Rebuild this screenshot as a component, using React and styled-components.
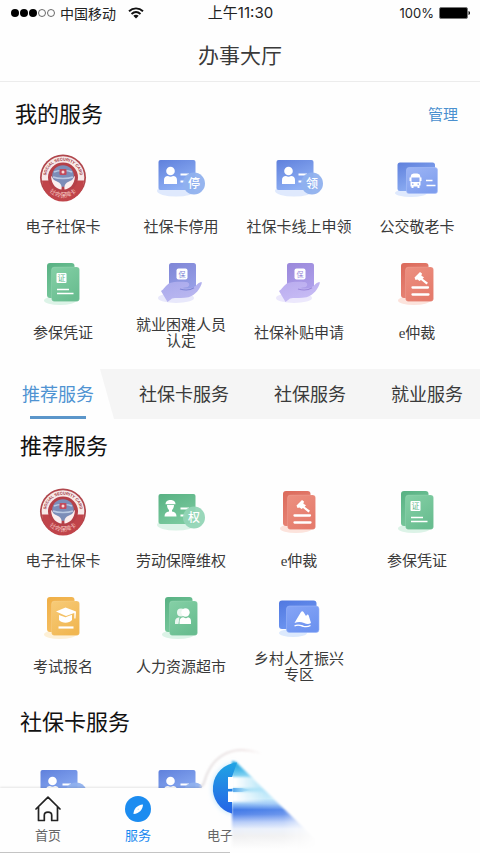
import React, { useState } from 'react';
import styled, { createGlobalStyle } from 'styled-components';

const GlobalStyle = createGlobalStyle`
  * {
    box-sizing: border-box;
  }
  body {
    margin: 0;
    background: #fefefe;
    font-family: "Liberation Sans", "Noto Sans CJK SC", sans-serif;
    color: #3a3a3a;
  }
  button {
    border: none;
    background: none;
    padding: 0;
    font-family: inherit;
    color: inherit;
    cursor: pointer;
  }
`;

const Shell = styled.div`
  display: flex;
  flex-direction: column;
  height: 100vh;
  overflow: hidden;
`;

const StatusBar = styled.div`
  display: grid;
  grid-template-columns: 1fr auto 1fr;
  align-items: center;
  height: 28px;
  padding: 0 9px 2px 10px;
  flex-shrink: 0;
  font-family: Inter, "Noto Sans CJK SC", sans-serif;
  font-size: 13px;
  color: #222;
`;

const StatusGroup = styled.div`
  display: flex;
  align-items: center;
  gap: ${({ $gap }) => $gap}px;
  justify-content: ${({ $end }) => ($end ? 'flex-end' : 'flex-start')};
`;

const Carrier = styled.span`
  font-size: 14px;
  margin-right: 8px;
`;

const Clock = styled.span`
  font-size: 15px;
  line-height: 20px;
`;

const TitleBar = styled.header`
  display: flex;
  align-items: center;
  justify-content: center;
  height: 54px;
  padding-top: 2px;
  flex-shrink: 0;
  border-bottom: 1px solid #ececec;
`;

const PageTitle = styled.h1`
  margin: 0;
  font-size: 21px;
  line-height: 32px;
  font-weight: 400;
`;

const Content = styled.main`
  flex: 1;
  min-height: 0;
  overflow-y: auto;
  scrollbar-width: none;
`;

const MyServices = styled.section`
  padding-bottom: 18px;
`;

const MyHead = styled.div`
  display: flex;
  align-items: center;
  justify-content: space-between;
  padding: 17px 22px 19px 15px;
`;

const SectionTitle = styled.h2`
  margin: 0;
  font-size: 22px;
  line-height: 32px;
  font-weight: 400;
  color: #111;
`;

const ManageButton = styled.button`
  font-size: 15px;
  line-height: 32px;
  color: #4a90cf;
`;

const ServiceGroup = styled.section`
  padding-top: ${({ $first }) => ($first ? 12 : 22)}px;

  ${SectionTitle} {
    padding: 0 20px 21px;
  }
`;

const Grid = styled.div`
  display: grid;
  grid-template-columns: repeat(4, 1fr);
  row-gap: 11px;
  padding: 0 4px;
`;

const ServiceItem = styled.button`
  display: flex;
  flex-direction: column;
  align-items: center;
  gap: 3px;
`;

const ServiceLabel = styled.span`
  display: flex;
  align-items: center;
  height: 36px;
  font-family: "Liberation Serif", "Noto Sans CJK SC", sans-serif;
  font-size: 15px;
  line-height: 16px;
  text-align: center;
  white-space: pre;
`;

const TabBar = styled.div`
  display: flex;
  height: 50px;
  background: #f5f5f5;
  overflow: hidden;
`;

const Tab = styled.button`
  position: relative;
  flex-shrink: 0;
  padding: 0 20px 2px ${({ $active }) => ($active ? 22 : 25)}px;
  font-size: 18px;
  color: ${({ $active }) => ($active ? '#4f93d2' : '#3a3a3a')};
  background: ${({ $active }) => ($active ? '#fefefe' : 'transparent')};
  clip-path: ${({ $active }) =>
    $active ? 'polygon(0 0, calc(100% - 14px) 0, 100% 100%, 0 100%)' : 'none'};

  &::after {
    content: '';
    display: ${({ $active }) => ($active ? 'block' : 'none')};
    position: absolute;
    left: 30px;
    right: 28px;
    bottom: 0;
    height: 3px;
    background: #5b96ca;
  }
`;

const NavBar = styled.nav`
  position: relative;
  display: grid;
  grid-template-columns: 19% 19% 24% 1fr;
  height: 65px;
  padding: 0 3px;
  flex-shrink: 0;
  background: #fefefe;
`;

const NavEdge = styled.div`
  position: absolute;
  left: 0;
  width: 48%;
  top: 0;
  bottom: 0;
  border-bottom: 1px solid #c4c4c4;
  pointer-events: none;

  &::before {
    content: '';
    position: absolute;
    inset: 0 12% 0 0;
    box-shadow: 0 -1px 2px rgba(0, 0, 0, 0.1);
    clip-path: inset(-4px 0 0 0);
  }
`;

const NavItem = styled.button`
  position: relative;
  display: flex;
  flex-direction: column;
  align-items: center;
  justify-content: flex-end;
  gap: 4px;
  padding-bottom: 7px;
  font-size: 13px;
  line-height: 20px;
  color: ${({ $active }) => ($active ? '#1989f0' : '#666')};
`;

const CardNavItem = styled(NavItem)`
  align-items: flex-start;
  padding-left: 24px;
`;

const CardArt = styled.svg`
  position: absolute;
  left: 15px;
  bottom: 1px;
`;

const palette = {
  blue: { back: ['#5f80dc', '#8fb0f4'], front: ['#9db5f5', '#7f9eee'], badge: '#8fb0ee', shade: '#dfe9fd' },
  royal: { back: ['#5078e0', '#6f97f2'], front: ['#86a5f6', '#6d93f0'], badge: '#8fb0ee', shade: '#dce9fd' },
  green: { back: ['#58b183', '#79c99d'], front: ['#85d0a6', '#69bd90'], badge: '#93d5b6', shade: '#dcf3e7' },
  red: { back: ['#db6a5b', '#e88576'], front: ['#ec9080', '#e57b6c'], badge: '#eda295', shade: '#fce3dc' },
  yellow: { back: ['#efae45', '#f5c065'], front: ['#f7cb78', '#f1b752'], badge: '#f6cd86', shade: '#fdf0d6' },
  indigo: { back: ['#7e85d6', '#969ee6'], front: ['#a9a9ec', '#bbb8f0'], badge: '#fff', shade: '#e8e8fb' },
  purple: { back: ['#9a88da', '#ad9eea'], front: ['#b9abee', '#c8bdf5'], badge: '#fff', shade: '#ece8fc' },
};

const Art = ({ tone, id, children }) => {
  const c = palette[tone];
  return (
    <svg width="56" height="56" viewBox="0 0 56 56" aria-hidden="true">
      <defs>
        <linearGradient id={`${id}-b`} x1="0" y1="0" x2="0.5" y2="1">
          <stop offset="0" stopColor={c.back[0]} />
          <stop offset="1" stopColor={c.back[1]} />
        </linearGradient>
        <linearGradient id={`${id}-f`} x1="0" y1="0" x2="0.6" y2="1">
          <stop offset="0" stopColor={c.front[0]} />
          <stop offset="1" stopColor={c.front[1]} />
        </linearGradient>
      </defs>
      {children}
    </svg>
  );
};

const IdCardIcon = ({ tone, id, mark, worker }) => (
  <Art tone={tone} id={id}>
    <ellipse cx="23" cy="41" rx="19" ry="5.5" fill={palette[tone].shade} />
    <rect x="5.5" y="10" width="37" height="30" rx="2" fill={`url(#${id}-b)`} />
    {worker ? (
      <g fill="#fff">
        <path d="M12.500 20.200c0-5.500 10-5.500 10 0z" />
        <path d="M14 21h7c0 2.800-1.200 4.300-2 5v1.500c3 .6 4.500 2 4.500 5H11.500c0-3 1.500-4.400 4.500-5V26c-.8-.7-2-2.200-2-5z" />
      </g>
    ) : (
      <g fill="#fff">
        <circle cx="17.500" cy="21" r="4.300" />
        <path d="M11 34v-4c0-2.500 1.500-4 4-4 1.500 1 3.500 1 5 0 2.500 0 4 1.500 4 4v4z" />
      </g>
    )}
    <path d="M27.500 24.500h8.500M27.500 31.500h5" stroke="#fff" strokeWidth="1.800" />
    <circle cx="41" cy="33.500" r="11" fill={palette[tone].badge} fillOpacity="0.94" />
    {mark && (
      <text x="41" y="37.500" fontSize="12" fontWeight="500" textAnchor="middle" fill="#fff">{mark}</text>
    )}
  </Art>
);

const BusCardIcon = ({ id }) => (
  <Art tone="blue" id={id}>
    <ellipse cx="22" cy="43" rx="16" ry="4" fill={palette.blue.shade} />
    <rect x="8.500" y="12.500" width="37.500" height="28.500" rx="2.500" fill={`url(#${id}-b)`} />
    <rect x="17.500" y="17.500" width="31" height="26" rx="2.500" fill={`url(#${id}-f)`} stroke="#a9c0f8" strokeWidth="0.600" />
    <path fill="#fff" fillRule="evenodd" d="M22 25.500c0-1.500 2-2 4.500-2s4.500.5 4.500 2l.5 2h1v3.500h-1v4.500h-1V38h-2v-1.500h-4V38h-2v-1.500h-1V31h-1v-3.500h1zM22.500 27.500v4.500h8v-4.500zM23 33.500v1.200h1.500v-1.200zM28.500 33.500v1.200H30v-1.200z" />
    <path d="M37 30.500h6.500M37.500 35.500h9" stroke="#fff" strokeWidth="1.700" />
  </Art>
);

const VillageIcon = ({ id }) => (
  <Art tone="royal" id={id}>
    <ellipse cx="22" cy="43" rx="14" ry="4" fill={palette.royal.shade} />
    <rect x="8" y="10.500" width="37.500" height="28.500" rx="3" fill={`url(#${id}-b)`} />
    <rect x="15.500" y="16" width="32.500" height="26.500" rx="3" fill={`url(#${id}-f)`} stroke="#9bb5f8" strokeWidth="0.600" />
    <path fill="#fff" d="M23.500 33l2-3.500 4.500-7.500c1-1.200 1.800-.8 2.500 0l2.500 4 1-1.200c.8-.5 1.300 0 1.700.7L40 33c-2.500 1.500-4.500 1-7 0-3-1.200-6-1.200-9.500 0z" />
    <path d="M23.500 36c3.500-2 6.500-.5 9 .3 2.500.7 4.500.5 7-.8" fill="none" stroke="#fff" strokeWidth="1.400" />
  </Art>
);

const DocIcon = ({ tone, id, children }) => (
  <Art tone={tone} id={id}>
    <ellipse cx="25" cy="44.500" rx="16" ry="4.500" fill={palette[tone].shade} />
    <rect x="12" y="7" width="27.500" height="35" rx="3" fill={`url(#${id}-b)`} />
    <rect x="16.500" y="11" width="28" height="34.500" rx="3" fill={`url(#${id}-f)`} stroke="#fff" strokeOpacity="0.200" strokeWidth="0.600" />
    {children}
  </Art>
);

const ProofIcon = ({ id }) => (
  <DocIcon tone="green" id={id}>
    <rect x="21.500" y="17" width="10" height="10" rx="1" fill="#fff" />
    <text x="26.500" y="25" fontSize="8" textAnchor="middle" fill="#64b98b">证</text>
    <path d="M22 33.500h12M22 37.500h16.500" stroke="#fff" strokeWidth="1.700" />
  </DocIcon>
);

const GavelIcon = ({ id }) => (
  <DocIcon tone="red" id={id}>
    <path d="M25.500 21.500l5.500-5.500 2 1.500-.6 2.200 2.600 1.500-1.300 1.500 5.300 4-1.500 1.700-5.500-4.400-1.500 1-2-1.500-2 .5z" fill="#fff" />
    <path d="M23.500 31.500H39M23.500 38.500H39.500" stroke="#fff" strokeWidth="2.300" strokeLinecap="round" />
  </DocIcon>
);

const ExamIcon = ({ id }) => (
  <DocIcon tone="yellow" id={id}>
    <path fill="#fff" d="M21 21.500l9.500-4 10.500 4-.5 7h-1.200v-5.500L31 26z" />
    <path fill="#fff" d="M24 25l6.500 2.200 6.500-2.500v5.300c-3 3.500-10 3.500-13 0z" />
    <path d="M23.500 37.500h15" stroke="#fff" strokeWidth="2.200" />
  </DocIcon>
);

const PeopleIcon = ({ id }) => (
  <DocIcon tone="green" id={id}>
    <g fill="#fff">
      <circle cx="28" cy="22.500" r="4" fillOpacity="0.850" />
      <circle cx="32.500" cy="22.500" r="4.200" />
      <path d="M22 34v-2.500c0-2.500 1.500-4 4.500-4.200L25.500 34z" fillOpacity="0.850" />
      <path d="M26.500 34v-2.500c0-2.500 1.500-4.200 4-4.200 2 1.200 3 1.200 4.500 0 2 .3 3 1.700 3 4.200V34z" />
    </g>
  </DocIcon>
);

const HandIcon = ({ tone, id }) => (
  <Art tone={tone} id={id}>
    <ellipse cx="23" cy="42" rx="18" ry="5" fill={palette[tone].shade} />
    <rect x="16" y="7" width="27" height="29" rx="2.500" fill={`url(#${id}-b)`} />
    <rect x="23.500" y="12.500" width="11" height="11" rx="2" fill="#fff" />
    <text x="29" y="20.500" fontSize="7" textAnchor="middle" fill={palette[tone].back[0]}>保</text>
    <path fill={`url(#${id}-f)`} d="M8 35c3-1.500 4.500-6 9-8 3-1.500 12.500-1.300 16.500-1 3 .2 3.800 3.800 1 5-1.500.6-4 .6-5.500 1 5 1.200 9.500.5 13-1.700 2.500-1.600 3.500-4.300 7-4-1.500 6.500-6.500 13-13.500 15-6 1.300-12 0-16.500 1.200l-4.500 3.500z" />
    <path d="M27 33c5 1.500 10.500 1 14-1.300" fill="none" stroke={palette[tone].back[0]} strokeWidth="1.200" />
  </Art>
);

const SealIcon = ({ id }) => (
  <svg width="56" height="56" viewBox="0 0 56 56" aria-hidden="true">
    <defs>
      <path id={`${id}-top`} d="M11.200 31.500A17.200 17.200 0 1 1 44.800 31.500" />
      <path id={`${id}-bottom`} d="M8.500 31A19.800 19.800 0 0 0 47.500 31" />
    </defs>
    <circle cx="28" cy="27.500" r="23" fill="#b0464c" />
    <circle cx="28" cy="27.500" r="21.300" fill="#f7e9e8" />
    <path d="M7 30.500A21 21 0 0 0 49 30.500z" fill="#c0444a" />
    <circle cx="28" cy="27.500" r="15" fill="#b54048" />
    <circle cx="28" cy="26" r="10.800" fill="#7c8db8" />
    <path d="M19 22c4-2 14-2 18 0M18 27c5 2 15 2 20 0" stroke="#b9c8e2" strokeWidth="1.400" fill="none" />
    <rect x="24.500" y="19" width="7" height="6" rx="1" fill="#c2495b" />
    <circle cx="28" cy="22" r="1.500" fill="#f6dcd9" />
    <path fill="#fbeeee" d="M16 26c1 0 1.500 2.500 3 4l5 2.500c2.500 1.500 3 4.500 2.500 7-4.500-.5-10-4-10.500-13.500zM40 26c-1 0-1.500 2.500-3 4l-5 2.500c-2.500 1.500-3 4.500-2.500 7 4.500-.5 10-4 10.500-13.500z" />
    <text fontSize="4" fontWeight="700" fill="#9c2f37" textAnchor="middle">
      <textPath href={`#${id}-top`} startOffset="50%">SOCIAL SECURITY CARD</textPath>
    </text>
    <text fontSize="6" fill="#f3c4c1" textAnchor="middle">
      <textPath href={`#${id}-bottom`} startOffset="50%">社会保障卡</textPath>
    </text>
  </svg>
);

const myServices = [
  { label: '电子社保卡', icon: <SealIcon id="m1" /> },
  { label: '社保卡停用', icon: <IdCardIcon tone="blue" id="m2" mark="停" /> },
  { label: '社保卡线上申领', icon: <IdCardIcon tone="blue" id="m3" mark="领" /> },
  { label: '公交敬老卡', icon: <BusCardIcon id="m4" /> },
  { label: '参保凭证', icon: <ProofIcon id="m5" /> },
  { label: '就业困难人员\n认定', icon: <HandIcon tone="indigo" id="m6" /> },
  { label: '社保补贴申请', icon: <HandIcon tone="purple" id="m7" /> },
  { label: 'e仲裁', icon: <GavelIcon id="m8" /> },
];

const recommended = [
  { label: '电子社保卡', icon: <SealIcon id="r1" /> },
  { label: '劳动保障维权', icon: <IdCardIcon tone="green" id="r2" mark="权" worker /> },
  { label: 'e仲裁', icon: <GavelIcon id="r3" /> },
  { label: '参保凭证', icon: <ProofIcon id="r4" /> },
  { label: '考试报名', icon: <ExamIcon id="r5" /> },
  { label: '人力资源超市', icon: <PeopleIcon id="r6" /> },
  { label: '乡村人才振兴\n专区', icon: <VillageIcon id="r7" /> },
];

const cardServices = [
  { icon: <IdCardIcon tone="blue" id="c1" /> },
  { icon: <IdCardIcon tone="blue" id="c2" /> },
];

const tabs = ['推荐服务', '社保卡服务', '社保服务', '就业服务'];

const ServiceGrid = ({ items }) => (
  <Grid>
    {items.map((item, index) => (
      <ServiceItem key={index} type="button">
        {item.icon}
        {item.label && <ServiceLabel>{item.label}</ServiceLabel>}
      </ServiceItem>
    ))}
  </Grid>
);

const SignalDots = () => (
  <svg width="46" height="10" viewBox="0 0 46 10" aria-hidden="true">
    {[5, 14, 23].map((x) => (
      <circle key={x} cx={x} cy="5" r="4" fill="#000" />
    ))}
    {[32, 41].map((x) => (
      <circle key={x} cx={x} cy="5" r="3.500" fill="none" stroke="#444" strokeWidth="0.800" />
    ))}
  </svg>
);

const WifiIcon = () => (
  <svg width="16" height="12" viewBox="0 0 16 12" aria-hidden="true">
    <path d="M1 4.200c4-3.800 10-3.800 14 0M3.500 7c2.700-2.400 6.300-2.400 9 0" fill="none" stroke="#111" strokeWidth="1.900" />
    <path d="M5.300 8.800c1.600-1.300 3.800-1.300 5.400 0L8 11.600z" fill="#111" />
  </svg>
);

const BatteryIcon = () => (
  <svg width="32" height="12" viewBox="0 0 32 12" aria-hidden="true">
    <rect x="0.500" y="0.500" width="28" height="11" rx="1.500" fill="#000" stroke="#777" />
    <path d="M29.500 4c2 .5 2 3.500 0 4z" fill="#111" />
  </svg>
);

const HomeIcon = () => (
  <svg width="26" height="26" viewBox="0 0 26 26" fill="none" stroke="#222" strokeWidth="1.700" strokeLinejoin="round" strokeLinecap="round" aria-hidden="true">
    <path d="M1 13L13 1.200 25 13M3.500 11v13.500h5.800v-5.300c0-4 7.400-4 7.400 0v5.300h5.800V11" />
  </svg>
);

const CompassIcon = () => (
  <svg width="26" height="26" viewBox="0 0 26 26" aria-hidden="true">
    <circle cx="13" cy="13" r="13" fill="#1c8cf0" />
    <path d="M18 8.500c-.2 5-3.500 9-9.500 9.500C8.500 13 12 9 18 8.500z" fill="#fff" />
    <circle cx="13.200" cy="13.200" r="0.700" fill="#bfe0fb" />
  </svg>
);

// Raised round button whose right side trails off towards the lower right
const CardButtonArt = () => (
  <CardArt width="125" height="107" viewBox="0 0 125 107" aria-hidden="true">
    <defs>
      <linearGradient id="disc" x1="0" y1="0" x2="0" y2="1">
        <stop offset="0" stopColor="#1fa4e4" />
        <stop offset="1" stopColor="#2663e6" />
      </linearGradient>
      <linearGradient id="trail" x1="0" y1="17" x2="0" y2="104" gradientUnits="userSpaceOnUse">
        <stop offset="0" stopColor="#18a4e2" />
        <stop offset="0.100" stopColor="#4fbcea" />
        <stop offset="0.200" stopColor="#a5e0f6" />
        <stop offset="0.300" stopColor="#a8e0f7" />
        <stop offset="0.420" stopColor="#c4eafa" />
        <stop offset="0.480" stopColor="#98c5f6" />
        <stop offset="0.550" stopColor="#3f78e6" />
        <stop offset="0.600" stopColor="#5485ea" />
        <stop offset="0.690" stopColor="#b5cbf8" />
        <stop offset="0.770" stopColor="#eaf0fb" />
        <stop offset="0.850" stopColor="#f0f0f1" />
        <stop offset="1" stopColor="#fefefe" />
      </linearGradient>
      <linearGradient id="fade" x1="33" y1="0" x2="120" y2="0" gradientUnits="userSpaceOnUse">
        <stop offset="0" stopColor="#fff" />
        <stop offset="0.600" stopColor="#ddd" />
        <stop offset="1" stopColor="#000" />
      </linearGradient>
      <linearGradient id="bar" x1="30" y1="0" x2="68" y2="0" gradientUnits="userSpaceOnUse">
        <stop offset="0" stopColor="#fff" />
        <stop offset="0.200" stopColor="#fff" />
        <stop offset="1" stopColor="#fff" stopOpacity="0" />
      </linearGradient>
      <linearGradient id="notch" x1="30" y1="0" x2="54" y2="0" gradientUnits="userSpaceOnUse">
        <stop offset="0" stopColor="#2286e6" />
        <stop offset="1" stopColor="#7cc8f2" stopOpacity="0" />
      </linearGradient>
      <linearGradient id="ring" x1="5" y1="0" x2="64" y2="0" gradientUnits="userSpaceOnUse">
        <stop offset="0" stopColor="#e3dfe0" />
        <stop offset="0.700" stopColor="#f0e6e6" />
        <stop offset="1" stopColor="#fefefe" />
      </linearGradient>
      <filter id="soft" x="-10%" y="-10%" width="120%" height="120%">
        <feGaussianBlur stdDeviation="1" />
      </filter>
      <filter id="glow" x="-20%" y="-20%" width="140%" height="140%">
        <feGaussianBlur stdDeviation="2.500" />
      </filter>
      <mask id="trail-mask">
        <path d="M34 16l4 1 82 80-4 12H34z" fill="url(#fade)" filter="url(#soft)" />
      </mask>
    </defs>
    <path d="M2 44C6 42 6 34 10 27 17 12 30 6 44 6h20v70H5z" fill="#fefefe" />
    <path d="M2 42C7 41 6 34 10 27 17 12 30 5 44 5q10 0 20 4" fill="none" stroke="url(#ring)" strokeWidth="2" filter="url(#soft)" />
    <path d="M37 18A26 26 0 0 0 34 69z" fill="#bfe4fb" filter="url(#glow)" />
    <g mask="url(#trail-mask)">
      <rect x="30" y="10" width="95" height="98" fill="url(#trail)" />
      <path d="M30 32h38v11H30zM30 47h38v10H30z" fill="url(#bar)" filter="url(#soft)" />
      <path d="M30 43h14l10 2-10 2H30z" fill="url(#notch)" />
    </g>
    <path d="M39 17.500A26 26 0 0 0 34 68.500V57h-4V47h4v-3h-4V32h4z" fill="url(#disc)" />
    <path d="M30 32h5v11.500h-5zM30 46.500h5V57h-5z" fill="#fff" />
  </CardArt>
);

const App = () => {
  const [activeTab, setActiveTab] = useState(0);

  return (
    <Shell>
      <GlobalStyle />
      <StatusBar>
        <StatusGroup $gap={4}>
          <SignalDots />
          <Carrier>中国移动</Carrier>
          <WifiIcon />
        </StatusGroup>
        <Clock>上午11:30</Clock>
        <StatusGroup $gap={5} $end>
          <span>100%</span>
          <BatteryIcon />
        </StatusGroup>
      </StatusBar>
      <TitleBar>
        <PageTitle>办事大厅</PageTitle>
      </TitleBar>
      <Content>
        <MyServices>
          <MyHead>
            <SectionTitle>我的服务</SectionTitle>
            <ManageButton type="button">管理</ManageButton>
          </MyHead>
          <ServiceGrid items={myServices} />
        </MyServices>
        <TabBar role="tablist">
          {tabs.map((name, index) => (
            <Tab
              key={name}
              type="button"
              role="tab"
              aria-selected={index === activeTab}
              $active={index === activeTab}
              onClick={() => setActiveTab(index)}
            >
              {name}
            </Tab>
          ))}
        </TabBar>
        <ServiceGroup $first>
          <SectionTitle>推荐服务</SectionTitle>
          <ServiceGrid items={recommended} />
        </ServiceGroup>
        <ServiceGroup>
          <SectionTitle>社保卡服务</SectionTitle>
          <ServiceGrid items={cardServices} />
        </ServiceGroup>
      </Content>
      <NavBar>
        <NavEdge />
        <NavItem type="button">
          <HomeIcon />
          首页
        </NavItem>
        <NavItem type="button" $active>
          <CompassIcon />
          服务
        </NavItem>
        <CardNavItem type="button">
          <CardButtonArt />
          电子
        </CardNavItem>
      </NavBar>
    </Shell>
  );
};

export default App;
